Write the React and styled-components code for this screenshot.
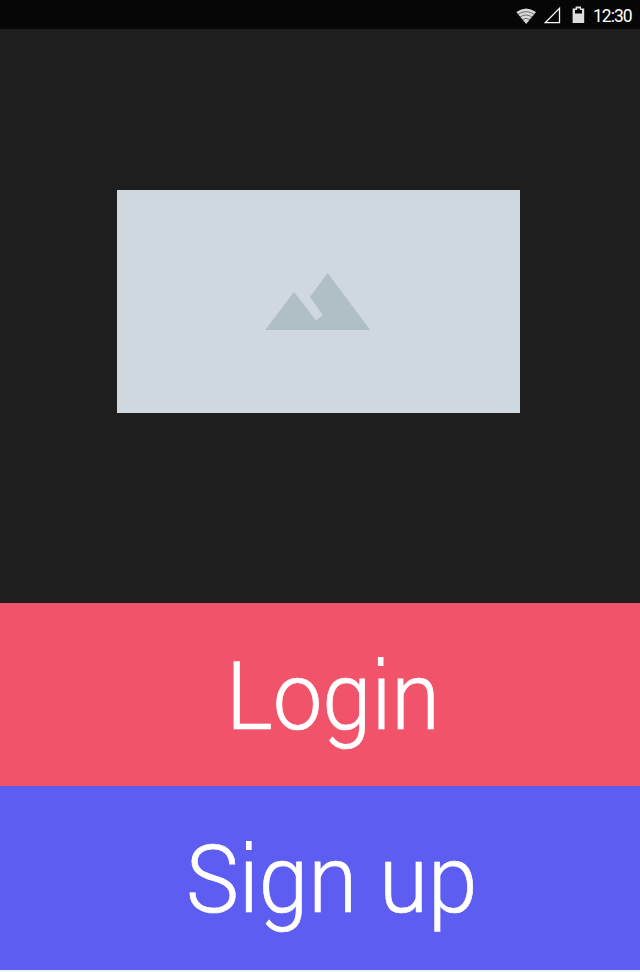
import React from 'react';
import styled, { createGlobalStyle } from 'styled-components';

const GlobalStyle = createGlobalStyle`
  *, *::before, *::after { box-sizing: border-box; }
  body { margin: 0; background: #edf4f5; font-family: Roboto, sans-serif; }
`;
const Screen = styled.main`
  width: 640px;
  height: 972px;
  display: flex;
  flex-direction: column;
  background: #edf4f5;
  overflow: hidden;
`;
const StatusBar = styled.header`
  height: 29px;
  background: #060606;
  display: flex;
  align-items: center;
  justify-content: flex-end;
  padding: 3px 9px 0 0;
`;
const StatusIcons = styled.svg`
  width: 75px;
  height: 24px;
  margin-right: 2px;
`;
const Clock = styled.time`
  width: 38px;
  font-size: 17.5px;
  line-height: 24px;
  color: #fff;
  white-space: nowrap;
  letter-spacing: -1px;
`;
const Hero = styled.section`
  height: 574px;
  background: #1e1e1e;
  padding: 161px 0 0 117px;
`;
const Placeholder = styled.div`
  width: 403px;
  height: 223px;
  background: #cfd8de;
  padding: 83px 0 0 148px;
`;
const Mountains = styled.svg`
  display: block;
  width: 106px;
  height: 58px;
`;
const ActionButton = styled.button`
  border: 0;
  height: ${(p) => p.$height}px;
  padding: 3px 0 0 ${(p) => p.$inset}px;
  background: ${(p) => p.$color};
  color: #fff;
  text-align: left;
  cursor: pointer;
`;
/* The pseudo-element squares off the round dot of the letter i. */
const Label = styled.span`
  position: relative;
  display: block;
  font-family: Roboto, sans-serif;
  font-weight: 300;
  font-size: 95px;
  line-height: ${(p) => p.$line}px;
  white-space: nowrap;
  -webkit-text-stroke: 0.7px #fff;
  transform-origin: left center;
  transform: scaleX(${(p) => p.$stretch});

  &::after {
    content: '';
    position: absolute;
    left: ${(p) => p.$dot}px;
    top: 51px;
    width: 6.5px;
    height: 9px;
    background: #fff;
    box-shadow: 0 0 0 3px ${(p) => p.$ground};
  }
`;

export default function App() {
  return (
    <Screen>
      <GlobalStyle />
      <StatusBar>
        <StatusIcons viewBox="516 4 75 24" aria-hidden="true">
          <path d="M516.3 12Q526 5 536 12L526.2 24Z" fill="#d8d8d8" />
          <path d="M518 14.3Q526 9 534.3 14.3M520 17Q526 13 532 17M522.2 19.7Q526 17 530 19.7" fill="none" stroke="#555" strokeWidth="0.8" />
          <path d="M545.2 22.7L559.5 8.4V22.7Z" fill="none" stroke="#f5f5f5" strokeWidth="1.3" />
          <path fillRule="evenodd" d="M572.6 8.5H575.6V6.5H581V8.5H584.2V23H572.6ZM575 10V13.5H582V10H580V8.5H577V10Z" fill="#ddd" />
        </StatusIcons>
        <Clock>12:30</Clock>
      </StatusBar>
      <Hero>
        <Placeholder>
          <Mountains viewBox="265 273 106 58" aria-hidden="true">
            <path d="M265.2 330L294 292L316 320.5L322.8 315L310 297L327.7 273L370.2 330Z" fill="#b0bec5" />
          </Mountains>
        </Placeholder>
      </Hero>
      <ActionButton $height={183} $inset={226} $color="#f1546a">
        <Label $stretch={0.932} $dot={162.5} $line={182} $ground="#f1546a">Login</Label>
      </ActionButton>
      <ActionButton $height={184} $inset={186} $color="#5d5df1">
        <Label $stretch={0.938} $dot={63.5} $line={180} $ground="#5d5df1">Sign up</Label>
      </ActionButton>
    </Screen>
  );
}
